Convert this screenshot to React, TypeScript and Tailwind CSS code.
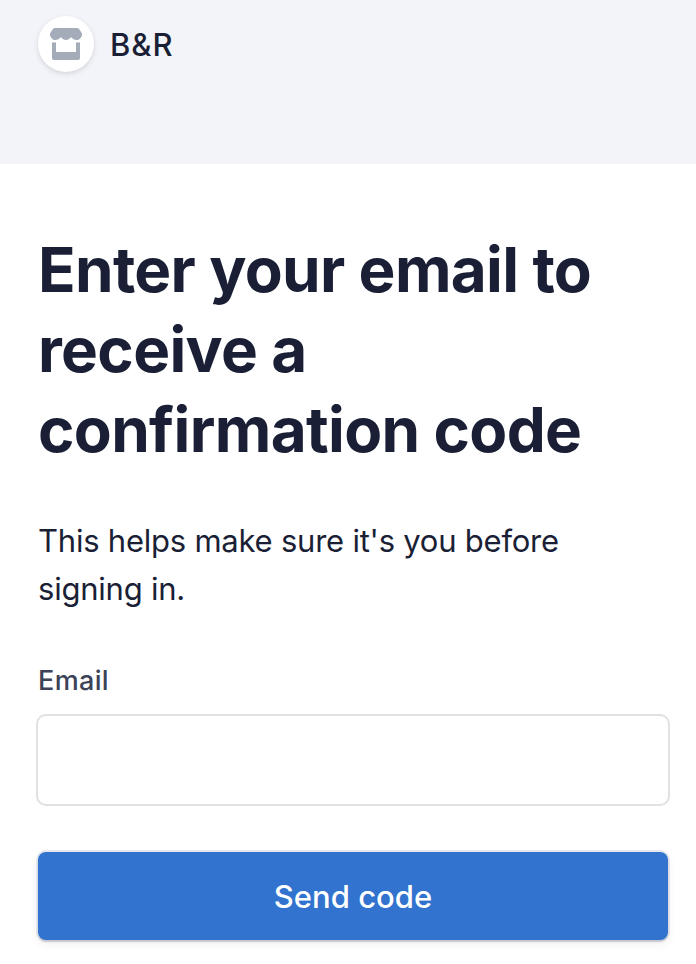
export default function App() {
  return (
    <main className="h-[964px] w-[696px] overflow-hidden bg-white font-['Inter',sans-serif] text-[#1a1f36]">
      <header className="flex h-[164px] items-start bg-[#f3f4f9] pl-[38px] pt-4">
        <div className="flex items-center gap-4">
          <div className="flex size-14 items-center justify-center rounded-full bg-white shadow-[0_2px_5px_rgba(40,45,70,0.15)]">
            <svg width="32" height="32" viewBox="0 0 32 32" fill="#a5acb9">
              <path d="M5 0h22q1.500 0 2.300 1.300L32 5.600v1.600C31.500 9.600 29 12 26.800 12c-2.200 0-3.600-.8-5-2.200-.5-.5-1-.5-1.500 0C19 11.200 18 12 16 12s-3-.8-4.300-2.200c-.5-.5-1-.5-1.500 0C8.800 11.200 7.400 12 5.200 12 3 12 .5 9.600 0 7.200V5.600l2.700-4.300Q3.500 0 5 0Z" />
              <path d="M2 14.300q2 .4 4 0V24h20v-9.700q2 .4 4 0V30a2 2 0 0 1-2 2H4a2 2 0 0 1-2-2Z" />
            </svg>
          </div>
          <span className="pt-px text-[31px] font-medium leading-10 tracking-[1px]">B&amp;R</span>
        </div>
      </header>
      <section className="pl-[38px] pr-7 pt-[66px]">
        <h1 className="text-[62px] font-bold leading-[80px] tracking-[-0.67px]">
          Enter your email to<br />receive a<br />confirmation code
        </h1>
        <p className="mt-[47px] text-[31px] leading-[48px] tracking-[-0.23px]">
          This helps make sure it's you before<br />signing in.
        </p>
        <form className="mt-[49px]">
          <label htmlFor="email" className="block text-[27px] font-medium leading-[38px] tracking-[0.35px] text-[#3c4257]">Email</label>
          <input id="email" type="email" className="-ml-0.5 mt-[14px] block h-[92px] w-[634px] rounded-[10px] border-2 border-[#e0e0e5] bg-white px-6 text-[31px] outline-none" />
          <button type="button" className="mt-[46px] block h-[88px] w-full rounded-lg bg-[#3173ce] pt-[3px] text-[31px] font-medium text-white shadow-[0_0_0_2px_rgba(70,90,150,0.12),0_2px_2px_rgba(0,0,0,0.12),0_4px_10px_rgba(60,66,87,0.08)]">Send code</button>
        </form>
      </section>
    </main>
  );
}
